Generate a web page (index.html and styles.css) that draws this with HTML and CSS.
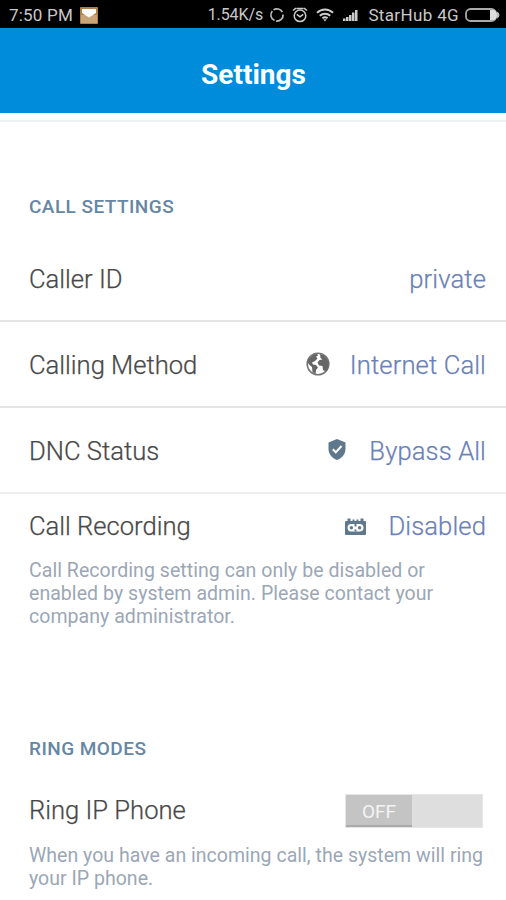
FILE: index.html
```html
<!DOCTYPE html>
<html lang="en">
<head>
<meta charset="utf-8">
<title>Settings</title>
<link rel="stylesheet" href="styles.css">
</head>
<body>
<div class="status">
  <span class="time">7:50 PM</span>
  <svg class="mail" width="18" height="17" viewBox="0 0 18 17"><rect width="18" height="17" rx="1" fill="#a9814f"/><rect x="1" y="8" width="16" height="8" fill="#c9a477"/><path d="M2 2h14v4l-7 4.500L2 6z" fill="#fff"/></svg>
  <span class="rate">1.54K/s</span>
  <svg class="sync" width="16" height="16" viewBox="0 0 16 16" fill="none" stroke="#bbb" stroke-width="1.7"><path d="M5.500 13.600A6.200 6.200 0 0 1 3.300 4M4.500 2.900a6.200 6.200 0 0 1 8.900 2.200M14.100 7.500a6.200 6.200 0 0 1-7 6.600"/></svg>
  <svg class="alarm" width="16" height="16" viewBox="0 0 16 16" fill="none" stroke="#ccc" stroke-width="1.5"><circle cx="8" cy="8.8" r="5.8"/><path d="M1 3.5 4 1.2M15 3.5 12 1.2M4.5 1.6h7M4.8 7.3 8 9.8l3.2-2.5"/></svg>
  <svg class="wifi" width="18" height="14" viewBox="0 0 18 14" fill="none" stroke="#ccc" stroke-width="2"><path d="M1 4.800C5.500.5 12.500.5 17 4.800M3.800 7.800c3-2.800 7.400-2.800 10.400 0M6.400 10.300c1.500-1.300 3.700-1.300 5.200 0"/><path d="M7.300 11.200h3.400L9 13.500z" fill="#ccc" stroke="none"/></svg>
  <svg class="signal" width="15" height="12" viewBox="0 0 15 12" fill="#ccc"><path d="M0 9.500h2.500V12H0zM3 8h2.500v4H3zM6 6h2.500v6H6zM9 3.500h2.500V12H9zM12 1h2.500v11H12z"/></svg>
  <span class="carrier">StarHub 4G</span>
  <svg class="battery" width="35" height="14" viewBox="0 0 35 14"><rect x="1" y="1" width="30" height="12" rx="4.500" fill="none" stroke="#aaa" stroke-width="1.800"/><path d="M25 2h4q3 1 3 5t-3 5h-4z" fill="#ddd"/><path d="M32 3.500q2.500 1 2.500 3.500T32 10.500z" fill="#bbb"/></svg>
</div>
<header class="header"><h1>Settings</h1></header>
<main>
  <section class="calls">
    <h2>CALL SETTINGS</h2>
    <div class="row lined"><span class="label">Caller ID</span><span class="value">private</span></div>
    <div class="row lined">
      <span class="label">Calling Method</span>
      <svg class="globe" width="24" height="24" viewBox="0 0 24 24"><circle cx="12" cy="12" r="10.800" fill="#fff" stroke="#777" stroke-width="1.600"/><path d="M3 6.500 7 3l4-1.500 1 2-2 1.300 1.500 1.700L9 9l-3 1.500 1 2 3 .5 2 2.500-2 2.500-.5 4L6.500 20 6 15 3 12.500 1.500 10zM14 2l4 1.500 3 3.500 2 4-1 5.500-2.500 3L17 18l-.5-4-3.500-.5-1.500-3L13.500 8l3-.5L14.500 6z" fill="#666"/></svg>
      <span class="value">Internet Call</span>
    </div>
    <div class="row lined last">
      <span class="label">DNC Status</span>
      <svg class="shield" width="18" height="21" viewBox="0 0 18 21"><path d="M9 0 17.500 3.500V10c0 5-3.500 9-8.500 11C4 19 .5 15 .5 10V3.500z" fill="#60788c"/><path d="m4.800 10.300 3 3L13.500 7" fill="none" stroke="#fff" stroke-width="2"/></svg>
      <span class="value">Bypass All</span>
    </div>
    <div class="row compact">
      <span class="label">Call Recording</span>
      <svg class="tape" width="21" height="17" viewBox="0 0 21 17"><path d="M1 3h1.500V.5h3V3h2V1.500h2V3h2V1.500h2V3h2V.5h3V3H20q1 0 1 1v12q0 1-1 1H1q-1 0-1-1V4q0-1 1-1z" fill="#60788c"/><rect x="2.500" y="6" width="16" height="7.500" rx="3.700" fill="#fff"/><circle cx="6.400" cy="9.800" r="1.700" fill="#60788c"/><circle cx="14.600" cy="9.800" r="1.700" fill="#60788c"/><path d="M9.500 6h2v2.500h-2zM9.500 11.500h2v2h-2z" fill="#60788c"/></svg>
      <span class="value">Disabled</span>
    </div>
    <p>Call Recording setting can only be disabled or<br>enabled by system admin. Please contact your<br>company administrator.</p>
  </section>
  <section class="rings">
    <h2>RING MODES</h2>
    <div class="row compact"><span class="label">Ring IP Phone</span><span class="toggle"><span class="thumb">OFF</span></span></div>
    <p>When you have an incoming call, the system will ring<br>your IP phone.</p>
  </section>
</main>
</body>
</html>
```
FILE: styles.css
```css
* { box-sizing: border-box; }
body { margin: 0; width: 506px; height: 900px; overflow: hidden; background: #fff; font-family: Roboto, "Liberation Sans", sans-serif; }
.status { height: 28px; background: #000; color: #c8c8c8; display: flex; align-items: center; padding: 2px 6px 0 9px; font-size: 17px; line-height: 26px; white-space: nowrap; }
.status svg { flex: none; }
.time { width: 71px; letter-spacing: .2px; }
.rate { margin-left: 110px; width: 62px; font-size: 16px; letter-spacing: -.1px; }
.alarm { margin-left: 7px; }
.wifi { margin-left: 8px; }
.signal { margin-left: 9px; }
.carrier { margin-left: 10px; width: 91px; letter-spacing: .35px; }
.battery { margin-left: 6px; }
.header { height: 85px; background: #008bdb; display: flex; justify-content: center; align-items: center; padding: 9px 0 0 1px; }
h1 { margin: 0; color: #fff; font-size: 28px; line-height: 34px; font-weight: 700; }
main { margin-top: 7px; border-top: 2px solid #eef1f4; }
h2 { margin: 0; padding-left: 29px; font-size: 19px; line-height: 24px; font-weight: 500; letter-spacing: .45px; color: #6686a5; }
.calls { padding-top: 73px; }
.calls h2 { margin-bottom: 17px; }
.row { display: flex; align-items: center; padding: 1px 20px 0 29px; font-size: 25.600px; line-height: 32px; font-weight: 300; }
.row.lined { height: 86px; border-bottom: 2px solid #e4e4e4; }
.row.last { border-color: #eee; }
.compact { height: 66px; }
.label { flex: 1; color: #484848; -webkit-text-stroke: .25px #484848; }
.value { color: #6a80b8; letter-spacing: .12px; -webkit-text-stroke: .25px #6a80b8; }
.globe { margin: 0 20px 2px 0; }
.shield { margin: 0 23px 3px 0; }
.tape { margin: 0 22px 0 0; }
p { margin: 0; padding-left: 29px; font-size: 19.500px; line-height: 23px; letter-spacing: .05px; color: #9ba7b6; white-space: nowrap; }
.calls .compact { padding: 0 20px 2px 29px; }
.calls p { margin-top: -1px; }
.rings { padding-top: 109px; }
.rings h2 { margin-bottom: 16px; }
.rings .compact { padding-top: 0; }
.toggle { width: 138px; height: 34px; background: #dedede; border: 1px solid #e6e6e6; margin: 1px 3px 0 0; }
.thumb { display: block; width: 66px; height: 32px; background: #c4c4c4; border-bottom: 2px solid #aaa; color: #f4f4f4; font-size: 19px; font-weight: 400; line-height: 34px; text-align: center; }
.rings p { margin-top: 1px; letter-spacing: .02px; }
```
